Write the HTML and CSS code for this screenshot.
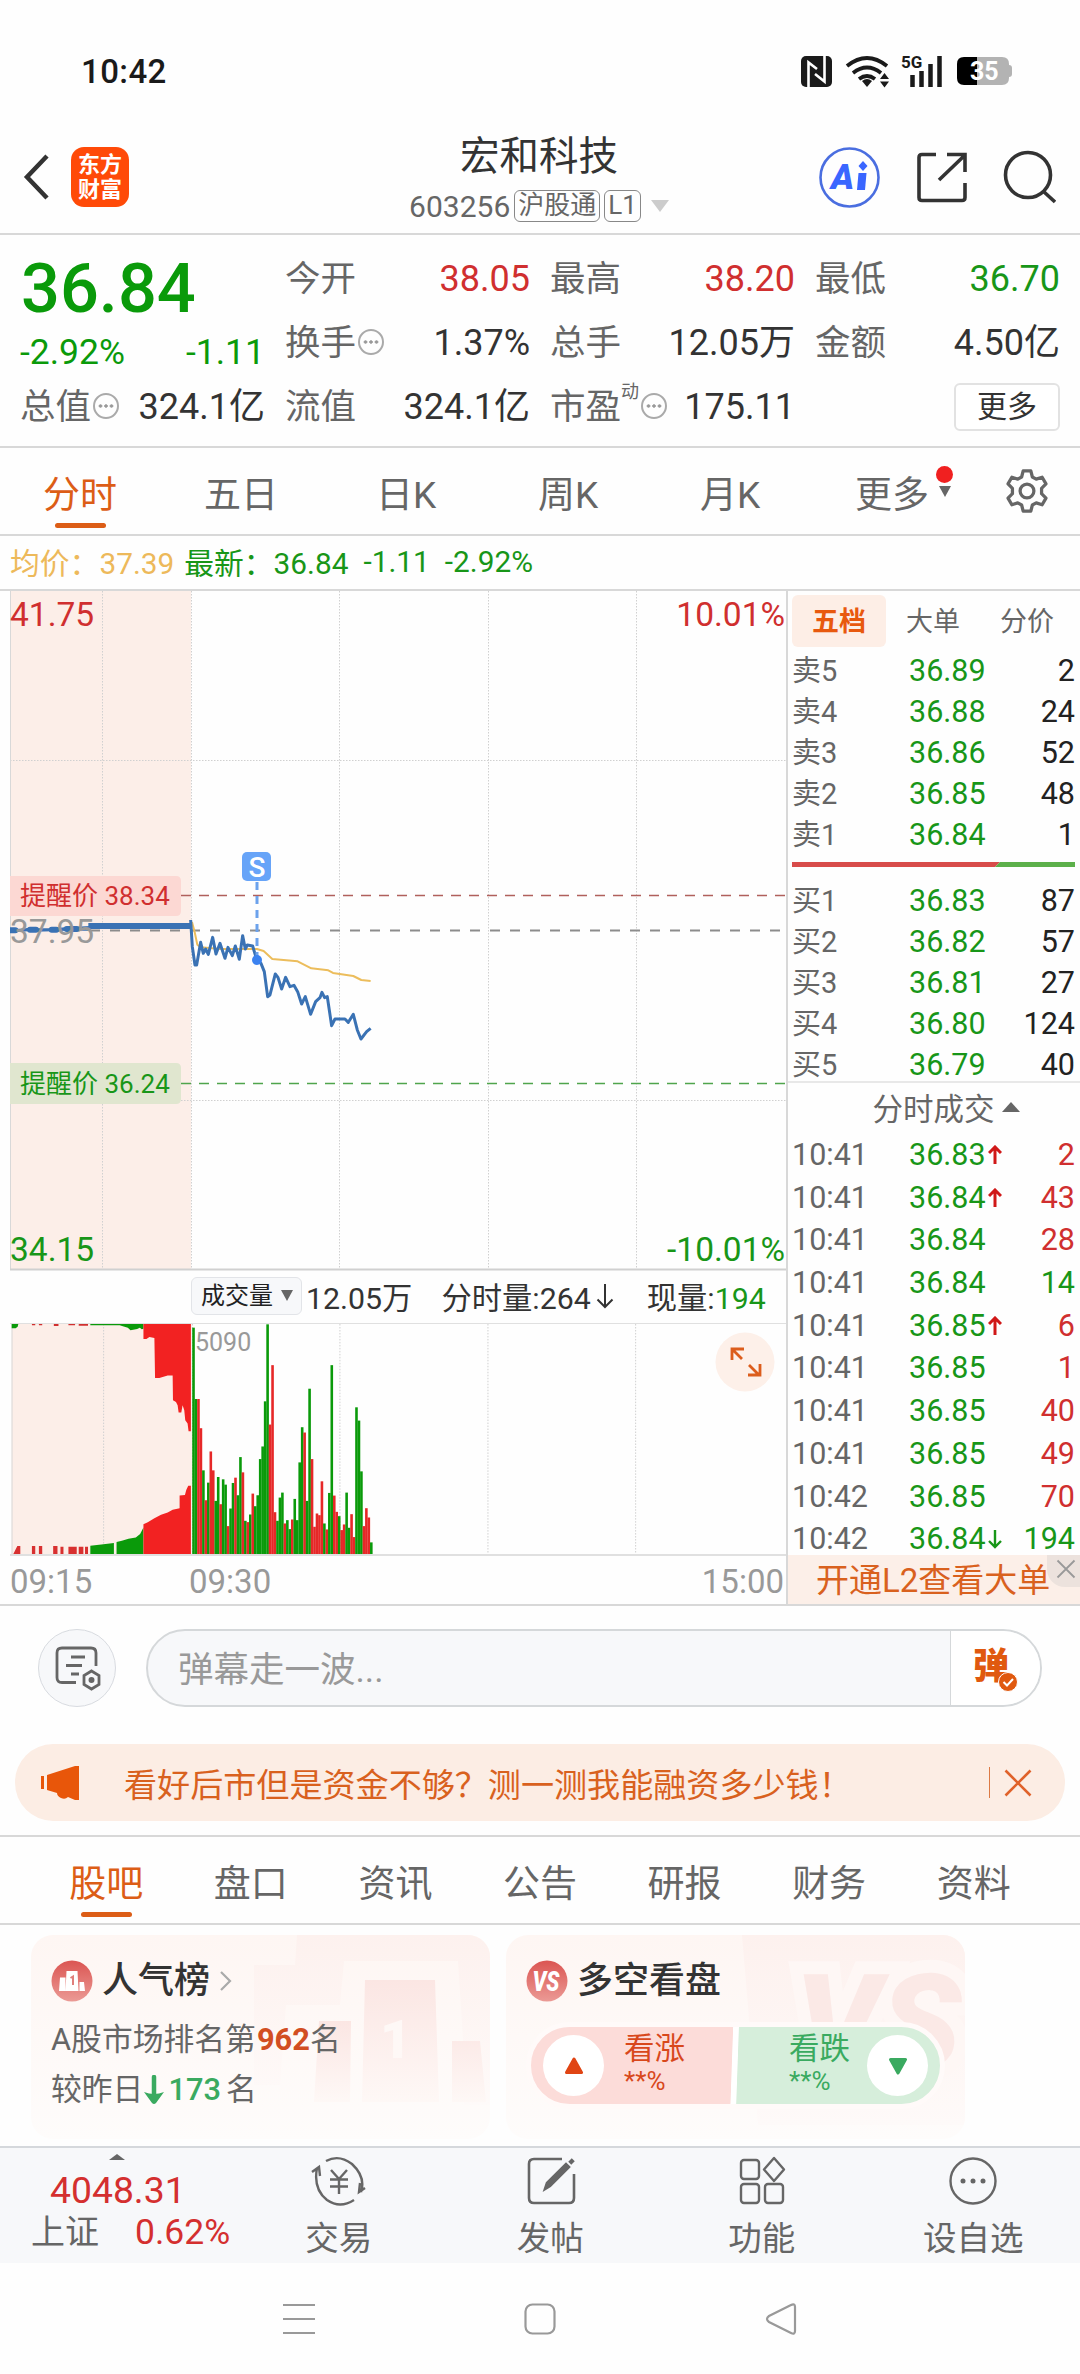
FILE: index.html
```html
<!DOCTYPE html>
<html lang="zh-CN">
<head>
    <meta charset="UTF-8">
    <meta name="viewport" content="width=device-width, initial-scale=1.0">
    <title>宏和科技 603256</title>
    <link rel="stylesheet" href="styles.css">
</head>

<body>

<!-- Phone status bar -->
<div class="status-bar">
    <span class="clock">10:42</span>
    <svg class="status-icons" width="214" height="34" viewBox="799 54 214 34">
        <rect x="801" y="56" width="31" height="31" rx="5" fill="#1a1a1a"/>
        <path d="M808.500 87V62.500L817 69M824.500 56V81.500L815 74" fill="none" stroke="#fff" stroke-width="2.600"/>
        <g fill="none" stroke="#1a1a1a" stroke-width="3.800">
            <path d="M847 66q20-16 40 0"/>
            <path d="M853 73q14-11 28 0"/>
            <path d="M859 79q8-6 16 0"/>
        </g>
        <path d="M862 81q5-4 10 0l-5 6z" fill="#1a1a1a"/>
        <path d="M880 79l4.500-6 4.500 6zM880 81.500l4.500 6 4.500-6z" fill="#1a1a1a"/>
        <text x="901" y="68" class="net-label">5G</text>
        <path d="M912.500 75v12M921.500 71v16M930.500 64v23M939.500 56v31" stroke="#1a1a1a" stroke-width="4.500"/>
        <path d="M968 57h34q7 0 7 7v1q3 0 3 3v6q0 3-3 3v1q0 7-7 7h-34z" fill="#b3b3b3"/>
        <path d="M977 57h-13q-7 0-7 7v14q0 7 7 7h13z" fill="#000"/>
        <text x="970" y="80" class="battery-label">35</text>
    </svg>
</div>

<!-- Title bar -->
<div class="header">
    <svg class="back" width="28" height="50" viewBox="0 0 28 50"><path d="M24 4L4 25l20 21" fill="none" stroke="#333" stroke-width="4.500"/></svg>
    <div class="logo"><span>东方</span><span>财富</span></div>
    <div class="stock-title">
        <h1>宏和科技</h1>
        <div class="stock-code">603256<span class="tag">沪股通</span><span class="tag">L1</span><i class="tri-down big"></i></div>
    </div>
    <svg class="header-icons" width="240" height="64" viewBox="816 145 240 64">
        <circle cx="849.500" cy="177.500" r="29" fill="none" stroke="#4a6ee0" stroke-width="2.600"/>
        <text x="831" y="188.500" class="ai-label">A</text>
        <path d="M858.500 173h8l-1.500 17h-8z" fill="#3a66ff"/>
        <path d="M863 161l4.500 5-4.500 5-4.500-5z" fill="#3a66ff"/>
        <g fill="none" stroke="#333" stroke-width="3.600">
            <path d="M936 154.500h-14q-3 0-3 3v40q0 3 3 3h40q3 0 3-3V183"/>
            <path d="M947 154.500h18V172M964 156l-25 24"/>
            <circle cx="1028" cy="175" r="22.500"/>
            <path d="M1043 191l12 11"/>
        </g>
    </svg>
</div>

<!-- Quote summary -->
<div class="quote">
    <div class="price-box">
        <div class="price">36.84</div>
        <div class="change"><span>-2.92%</span><span>-1.11</span></div>
    </div>
    <div class="cell"><label>今开</label><b class="red">38.05</b></div>
    <div class="cell"><label>最高</label><b class="red">38.20</b></div>
    <div class="cell"><label>最低</label><b class="green">36.70</b></div>
    <div class="cell"><label>换手<i class="info"></i></label><b>1.37%</b></div>
    <div class="cell"><label>总手</label><b>12.05万</b></div>
    <div class="cell"><label>金额</label><b>4.50亿</b></div>
    <div class="cell"><label>总值<i class="info"></i></label><b>324.1亿</b></div>
    <div class="cell"><label>流值</label><b>324.1亿</b></div>
    <div class="cell"><label>市盈<sup>动</sup><i class="info"></i></label><b>175.11</b></div>
    <div class="cell more-cell"><button class="more">更多</button></div>
</div>

<!-- Chart period tabs -->
<div class="period-tabs">
    <span class="active">分时</span>
    <span>五日</span>
    <span>日K</span>
    <span>周K</span>
    <span>月K</span>
    <span class="more-tab">更多<i class="dot"></i><i class="tri-down"></i></span>
    <svg width="46" height="46" viewBox="0 0 24 24" fill="none" stroke="#666" stroke-width="1.700" stroke-linejoin="round">
        <path d="M10 1.500h4l.8 3.200 2 1.100 3.100-1 2 3.500-2.300 2.300v2.800l2.300 2.300-2 3.500-3.100-1-2 1.100-.8 3.200h-4l-.8-3.200-2-1.100-3.100 1-2-3.500 2.300-2.300v-2.800l-2.300-2.300 2-3.500 3.100 1 2-1.100z"/>
        <circle cx="12" cy="12" r="3.600"/>
    </svg>
</div>

<div class="avg-line">
    <span class="yellow">均价：37.39</span>
    <span class="green">最新：36.84</span>
    <span class="green">-1.11</span>
    <span class="green">-2.92%</span>
</div>

<div class="market">
    <!-- Left side (price and volume charts) -->
    <div class="charts">
        <svg class="price-chart" width="776" height="680" viewBox="10 591 776 680">
            <rect x="10" y="591" width="181" height="679" fill="#fceee8"/>
            <g stroke="#d0d0d0" stroke-width="1" stroke-dasharray="1.500 1.500">
                <path d="M102.500 591v679M191.500 591v679M339.500 591v679M488.500 591v679M636.500 591v679M10 760.500h776M10 1100.500h776"/>
            </g>
            <path d="M10.500 591v679" stroke="#d8d8d8"/>
            <path d="M10 1269.500h776" stroke="#d0d0d0" stroke-width="2"/>
            <path d="M10 930.500h776" stroke="#8c8c8c" stroke-width="2" stroke-dasharray="10 10"/>
            <path d="M181 895.500h605" stroke="#b0605c" stroke-width="1.500" stroke-dasharray="10 8"/>
            <path d="M181 1083.500h605" stroke="#4fa54c" stroke-width="1.500" stroke-dasharray="10 8"/>
            <path d="M10 876h166q5 0 5 5v30q0 5-5 5H10z" fill="#fcd8d3"/>
            <path d="M10 1063h166q5 0 5 5v31q0 5-5 5H10z" fill="#e0e6cf"/>
            <text x="20" y="905" class="alert-text red">提醒价 38.34</text>
            <text x="20" y="1093" class="alert-text green">提醒价 36.24</text>
            <g transform="translate(0 900) scale(.3333)" fill="none" stroke-linejoin="round">
                <path d="M576 66l8 30 8 38 10 8 60 5 109 0 20 6 26 24 76 7 41 21 51 6 14 8 61 9 24 12 28 3" stroke="#ecbd5c" stroke-width="6"/>
                <path d="M28 91H60L90 88l15 2 55-1 40-2 70-4M190 87h80" stroke="#3a72b4" stroke-width="10" />
                <path d="M28 91h18M90 89h18M155 89h14M200 87h30" stroke="#3a72b4" stroke-width="18" stroke-linecap="round"/>
                <path d="M265 78H575" stroke="#3a72b4" stroke-width="18"/>
                <path d="M572 60l5 80 8 55h5l12-68 8 33 7-13 8 16 13-51 10 50 12-32 15 45 9-33 13 25 9-29 12 40 10-71 8 40 6-12 16 3 12 40 13 12 10 25 10 75 7-5 16-63 8 10 11 35 12-35 13 28 12-4 11 19 12 37 11-22 16 53 15-38 13-12 6-16 8 16 8-3 13 87 10-20h30l10 10 15-24 12 47 11 27 17-22 12-10" stroke="#3a72b4" stroke-width="9"/>
            </g>
            <path d="M257 882v74" stroke="#6ca2ec" stroke-width="3" stroke-dasharray="8 6"/>
            <circle cx="257" cy="960" r="5" fill="#3b82f0"/>
            <rect x="242" y="852" width="29" height="29" rx="5" fill="#67a4f8"/>
            <text x="257" y="876.500" class="s-badge">S</text>
            <text x="10" y="626" class="axis red">41.75</text>
            <text x="785" y="626" class="axis end red">10.01%</text>
            <text x="10" y="943" class="axis gray">37.95</text>
            <text x="10" y="1261" class="axis green">34.15</text>
            <text x="785" y="1261" class="axis end green">-10.01%</text>
        </svg>

        <div class="volume-head">
            <span class="volume-select">成交量<i class="tri-down"></i></span>
            <span>12.05万</span>
            <span class="minute-volume">分时量:264<svg width="20" height="28" viewBox="0 0 20 28"><path d="M10 2v23M2.500 17.500L10 25l7.500-7.500" fill="none" stroke="#333" stroke-width="2"/></svg></span>
            <span>现量:<b class="green">194</b></span>
        </div>

        <div class="volume-wrap">
            <svg class="volume-chart" width="776" height="231" viewBox="30 190 2328 693">
                <rect x="30" y="190" width="543" height="693" fill="#fceee8"/>
                <path d="M307 190v693M575 190v693M1019 190v693M1465 190v693M1910 190v693" stroke="#d0d0d0" stroke-width="3" stroke-dasharray="4.500 4.500"/>
                <path d="M31 190v693" stroke="#d8d8d8" stroke-width="3"/>
                <!-- call auction, upper half -->
                <path d="M30 190h20l-2 8-6 5H30zM267 190h95v4h-95zM345 190h82v14l-5 2-6-5-8 4-20 4-8-8-20-6z" fill="#0a9a0a"/>
                <path d="M91 190h10v4H91zM112 190h10v4h-10zM157 190h14v6h-14zM201 190h20v4h-20zM232 190h28v5h-28z" fill="#d03030"/>
                <path d="M427 190H570V513H563L560 490 553 480 550 450 545 435 541 457H533L530 435 525 425 516 420 515 345 500 345 475 353H462L460 232 445 229 436 235H427z" fill="#f22222"/>
                <!-- call auction, lower half -->
                <path d="M35 883l12-24h9v24zM91 859h10v24H91zM112 859h10v24h-10zM155 859h13v24h-13zM177 861h9v22h-9zM201 861h25v22h-25zM232 861h14v22h-14zM251 861h9v22h-9z" fill="#d83030"/>
                <path d="M267 883v-25l33-4 38-4v33zM346 883v-36l16-4 20-6 22-4 13-10 10-20v80z" fill="#0a9a0a"/>
                <path d="M427 883V793L440 787 460 775 480 765 500 758 515 750 536 745V707L552 705 556 690 562 677H570V883z" fill="#f22222"/>
                <g id="volume-bars"></g>
            </svg>
            <span class="volume-max">5090</span>
            <svg class="expand" width="60" height="60" viewBox="0 0 60 60">
                <circle cx="30" cy="30" r="29.500" fill="#fdf0e9"/>
                <path d="M17 28V17h12M17.500 17.500L27 27M45 32v11H33M43.500 42.500L34 33" fill="none" stroke="#dc5d1c" stroke-width="2.800"/>
            </svg>
        </div>

        <div class="times"><span>09:15</span><span>09:30</span><span class="last">15:00</span></div>
    </div>

    <!-- Right side (order book) -->
    <div class="book">
        <div class="book-tabs"><span class="active">五档</span><span>大单</span><span>分价</span></div>
        <div class="levels" id="sells"></div>
        <svg class="ratio" width="283" height="5" viewBox="0 0 283 5"><path d="M0 0h208l-5 5H0z" fill="#d84c4a"/><path d="M208 0h75v5h-80z" fill="#5cb04a"/></svg>
        <div class="levels buys" id="buys"></div>
        <div class="trades-title">分时成交<i class="tri-up"></i></div>
        <div class="trades" id="trades"></div>
        <div class="l2-banner">开通L2查看大单
            <span class="l2-close"><svg width="20" height="20" viewBox="0 0 20 20"><path d="M1.500 1.500l17 17M18.500 1.500l-17 17" stroke="#999" stroke-width="1.800"/></svg></span>
        </div>
    </div>
</div>

<!-- Bullet comments -->
<div class="comment-row">
    <div class="comment-set">
        <svg width="50" height="50" viewBox="0 0 50 50" fill="none" stroke="#666" stroke-width="2.800">
            <path d="M24 39.500H10q-5 0-5-5V10q0-5 5-5h29q5 0 5 5v13"/>
            <path d="M19 14h14M14 22.500h16M19 31h8"/>
            <path d="M39.500 28l7.500 4.500v9L39.500 46 32 41.500v-9z"/>
            <circle cx="39.500" cy="37" r="1.600" fill="#666"/>
        </svg>
    </div>
    <div class="comment-input">
        <span class="placeholder">弹幕走一波...</span>
        <span class="bullet">弹<svg width="20" height="20" viewBox="0 0 20 20"><circle cx="10" cy="10" r="9.500" fill="#e0590f" stroke="#fff"/><path d="M5.500 10l3.500 3.500 6-6.500" fill="none" stroke="#fff" stroke-width="2"/></svg></span>
    </div>
</div>

<div class="notice">
    <svg width="40" height="34" viewBox="0 0 40 34" fill="#e8560a"><path d="M0 10h3v13H0zM6 9L34 0h4v34h-4l-7-3q-3 3-7 1-4-2-4-5L6 24z"/></svg>
    <p>看好后市但是资金不够？测一测我能融资多少钱！</p>
    <i class="notice-line"></i>
    <svg width="28" height="28" viewBox="0 0 28 28"><path d="M1.500 1.500l25 25M26.500 1.500l-25 25" stroke="#e0622a" stroke-width="2.600"/></svg>
</div>

<div class="section-tabs">
    <span class="active">股吧</span>
    <span>盘口</span>
    <span>资讯</span>
    <span>公告</span>
    <span>研报</span>
    <span>财务</span>
    <span>资料</span>
</div>

<div class="cards">
    <div class="card rank">
        <svg class="watermark" width="236" height="170" viewBox="255 1934 236 170">
            <defs>
                <linearGradient id="fade" x1="0" y1="0" x2="0" y2="1"><stop offset="0" stop-color="#fbe6e3"/><stop offset="1" stop-color="#fef8f6"/></linearGradient>
                <linearGradient id="back" x1="0" y1="0" x2="0" y2="1"><stop offset="0" stop-color="#fdf1ee"/><stop offset="1" stop-color="#fefaf9"/></linearGradient>
            </defs>
            <path d="M298 1934h193v170h-26v-50l-6-94H345l-4 44h-54l-6 80h-26v-120h41z" fill="url(#back)"/>
            <path d="M366 1979h70l4 122h-77z" fill="url(#fade)"/>
            <path d="M320 2020h32l-1 81h-36zM453 2040h28l6 61h-34z" fill="url(#fade)"/>
            <text x="381" y="2057" class="podium">1</text>
        </svg>
        <h2>
            <svg width="42" height="42" viewBox="0 0 42 42">
                <defs><linearGradient id="ball" x1="0" y1="0" x2="0" y2="1"><stop offset="0" stop-color="#db5552"/><stop offset="1" stop-color="#eb9a95"/></linearGradient></defs>
                <circle cx="21" cy="21" r="20.500" fill="url(#ball)"/>
                <path d="M9 17.500h5.500V31H8zM15.500 11h11l1 20h-13zM28.500 22h4.500l1 9h-5.500z" fill="#fff"/>
                <path d="M19.500 18l2.500-1.500v8.500" fill="none" stroke="#e07f7b" stroke-width="2"/>
            </svg>
            人气榜
            <svg width="14" height="22" viewBox="0 0 14 22"><path d="M2 2l9 9-9 9" fill="none" stroke="#aaa" stroke-width="2.200"/></svg>
        </h2>
        <p>A股市场排名第<b class="orange">962</b>名</p>
        <p>较昨日<svg width="20" height="30" viewBox="0 0 20 30"><path d="M10 2v18" stroke="#3aaa60" stroke-width="4.500" stroke-linecap="round"/><path d="M0 17q10 4 20 0l-8 11q-2 2-4 0z" fill="#3aaa60"/></svg><b class="up-green">173</b>名</p>
    </div>
    <div class="card vote">
        <svg class="watermark" width="224" height="204" viewBox="741 1934 224 204">
            <path d="M742 1934h223v190H758z" fill="url(#back)"/>
            <text x="795" y="2068" class="vs-mark" textLength="166" lengthAdjust="spacingAndGlyphs">VS</text>
        </svg>
        <h2>
            <svg width="42" height="42" viewBox="0 0 42 42">
                <circle cx="21" cy="21" r="20.500" fill="url(#ball)"/>
                <text x="20" y="31" class="vs-icon" textLength="27" lengthAdjust="spacingAndGlyphs">VS</text>
            </svg>
            多空看盘
        </h2>
        <div class="vote-pill">
            <div class="vote-up">
                <i class="vote-ball"><svg width="20" height="18" viewBox="0 0 20 18"><path d="M10 2l7.500 13.500h-15z" fill="#e04514" stroke="#e04514" stroke-width="3" stroke-linejoin="round"/></svg></i>
                <span>看涨<small>**%</small></span>
            </div>
            <div class="vote-down">
                <span>看跌<small>**%</small></span>
                <i class="vote-ball"><svg width="20" height="18" viewBox="0 0 20 18"><path d="M10 16l7.500-13.500h-15z" fill="#3aaa60" stroke="#3aaa60" stroke-width="3" stroke-linejoin="round"/></svg></i>
            </div>
        </div>
    </div>
</div>

<!-- Bottom navigation -->
<div class="bottom-nav">
    <div class="index">
        <i class="tri-up"></i>
        <div class="index-value">4048.31</div>
        <div class="index-row"><span>上证</span><b>0.62%</b></div>
    </div>
    <div class="nav-item">
        <svg width="56" height="52" viewBox="0 0 56 52" fill="none" stroke="#666" stroke-width="2.400">
            <path d="M15 6q13-7 26 3 14 13 9 28M54 33l-6 4 1-9M43 45q-14 9-27 0Q2 34 6 13M1 17l7-5 1 9"/>
            <path d="M20 15l8 9 8-9M19 24.500h18M19 31.500h18M28 24v15"/>
        </svg>
        <span>交易</span>
    </div>
    <div class="nav-item">
        <svg width="56" height="52" viewBox="0 0 56 52" fill="none" stroke="#666" stroke-width="2.600">
            <path d="M40 4H12q-5 0-5 5v34q0 5 5 5h35q5 0 5-5V19"/>
            <path d="M23 34l2-6L44 9l3 3-19 19z" fill="#666"/><path d="M48 5l3 3" stroke-width="5"/>
        </svg>
        <span>发帖</span>
    </div>
    <div class="nav-item">
        <svg width="56" height="52" viewBox="0 0 56 52" fill="none" stroke="#666" stroke-width="2.400" stroke-linejoin="round">
            <rect x="7" y="5" width="18" height="19" rx="3"/>
            <rect x="7" y="29" width="18" height="19" rx="3"/>
            <rect x="31" y="29" width="18" height="19" rx="3"/>
            <path d="M40 3l10 11.500L40 26 30 14.500z"/>
        </svg>
        <span>功能</span>
    </div>
    <div class="nav-item">
        <svg width="56" height="52" viewBox="0 0 56 52" fill="#666">
            <circle cx="28" cy="26" r="22.500" fill="none" stroke="#666" stroke-width="2.400"/>
            <circle cx="18" cy="26" r="2.500"/><circle cx="28" cy="26" r="2.500"/><circle cx="38" cy="26" r="2.500"/>
        </svg>
        <span>设自选</span>
    </div>
</div>

<div class="system-nav">
    <svg width="32" height="32" viewBox="0 0 32 32"><path d="M0 2h32M0 16h32M0 30h32"/></svg>
    <svg width="32" height="32" viewBox="0 0 32 32"><rect x="1.500" y="1.500" width="29" height="29" rx="7"/></svg>
    <svg width="32" height="32" viewBox="0 0 32 32"><path d="M30 4v24q0 4-4 2L4 19q-4-3 0-6L26 2q4-2 4 2z"/></svg>
</div>

<script>
    // price, size
    const sells = [["卖5", "36.89", 2], ["卖4", "36.88", 24], ["卖3", "36.86", 52], ["卖2", "36.85", 48], ["卖1", "36.84", 1]];
    const buys = [["买1", "36.83", 87], ["买2", "36.82", 57], ["买3", "36.81", 27], ["买4", "36.80", 124], ["买5", "36.79", 40]];

    // time, price, direction, size, colour of the size
    const trades = [
        ["10:41", "36.83", "up", 2, "red"],
        ["10:41", "36.84", "up", 43, "red"],
        ["10:41", "36.84", "", 28, "red"],
        ["10:41", "36.84", "", 14, "green"],
        ["10:41", "36.85", "up", 6, "red"],
        ["10:41", "36.85", "", 1, "red"],
        ["10:41", "36.85", "", 40, "red"],
        ["10:41", "36.85", "", 49, "red"],
        ["10:42", "36.85", "", 70, "red"],
        ["10:42", "36.84", "down", 194, "green"]
    ];

    const arrows = {
        up: '<svg width="14" height="20" viewBox="0 0 14 20"><path d="M7 19V2M1 8l6-6 6 6" fill="none" stroke="#d01818" stroke-width="3"/></svg>',
        down: '<svg width="14" height="20" viewBox="0 0 14 20"><path d="M7 1v17M1 12l6 6 6-6" fill="none" stroke="#189618" stroke-width="2.400"/></svg>'
    };

    function renderLevels(id, rows) {
        document.getElementById(id).innerHTML = rows.map(r =>
            `<div class="row"><span>${r[0]}</span><span class="green">${r[1]}</span><span class="size">${r[2]}</span></div>`).join("");
    }

    renderLevels("sells", sells);
    renderLevels("buys", buys);

    document.getElementById("trades").innerHTML = trades.map(t =>
        `<div class="row"><span>${t[0]}</span><span class="green">${t[1]}${arrows[t[2]] || ""}</span><span class="size ${t[4]}">${t[3]}</span></div>`).join("");

    // One bar per minute since 09:30, g = down, r = up
    const volumes = ("682g 467g 467r 379r 252g 162r 215g 309r 252r 160g 232g 150r 225g 209g 84r 137g 214g 230r 177g 292g " +
        "246r 100g 96r 119g 182r 144g 177g 286g 324g 460g 692g 390r 569r 126r 100g 170g 185g 92r 102g 75g " +
        "104r 166g 102g 276g 382g 366r 160g 498g 286r 82r 122r 117r 219r 92g 74r 184g 569g 176r 127r 114g " +
        "72r 89r 185g 79g 120r 51r 442g 402g 249g 84r 138r 110r 35g").split(" ");

    document.getElementById("volume-bars").innerHTML = volumes.map((v, i) => {
        const h = parseInt(v);
        const color = v.endsWith("g") ? "#0a9a0a" : "#e62828";
        return `<rect x="${(574 + i * 7.44).toFixed(1)}" y="${883 - h}" width="7.8" height="${h}" fill="${color}"/>`;
    }).join("");
</script>

</body>
</html>
```
FILE: styles.css
```css
/* Basic layout and styling */
* {
    box-sizing: border-box;
}

body {
    width: 1080px;
    height: 2374px;
    margin: 0;
    display: flex;
    flex-direction: column;
    overflow: hidden;
    background-color: #fefefe;
    color: #333;
    font-family: Roboto, "Noto Sans CJK SC", sans-serif;
    font-weight: 400;
}

b {
    font-weight: 400;
}

i {
    font-style: normal;
}

svg {
    flex: none;
    display: block;
}

.red {
    color: #d02f2f;
    fill: #d02f2f;
}

.green {
    color: #189618;
    fill: #189618;
}

.yellow {
    color: #edb95a;
}

.gray {
    fill: #999;
}

.tri-down {
    display: inline-block;
    border: 6.5px solid transparent;
    border-top: 11px solid #666;
    border-bottom: 0;
}

.tri-down.big {
    border-width: 12px 9px 0;
    border-top-color: #ccc;
    margin-left: 10px;
}

.tri-up {
    display: inline-block;
    border: 9px solid transparent;
    border-bottom: 10px solid #666;
    border-top: 0;
}

/* Status bar */
.status-bar {
    height: 126px;
    padding: 16px 67px 0 81px;
    display: flex;
    align-items: center;
    justify-content: space-between;
}

.status-icons {
    overflow: visible;
}

.clock {
    font-size: 33px;
    font-weight: 500;
    letter-spacing: 0.4px;
    color: #1a1a1a;
}

.net-label {
    font-size: 17px;
    font-weight: 700;
    fill: #1a1a1a;
}

.battery-label {
    font-size: 25px;
    font-weight: 700;
    fill: #fff;
}

/* Header */
.header {
    height: 109px;
    padding: 0 24px 5px 23px;
    display: flex;
    align-items: center;
    border-bottom: 2px solid #d8d8d8;
}

.ai-label {
    font-size: 35px;
    font-weight: 900;
    font-style: italic;
    fill: #3a66ff;
}

.logo {
    width: 58px;
    height: 60px;
    margin-left: 20px;
    border-radius: 13px;
    background-color: #ff4a08;
    color: #fff;
    font-size: 22px;
    font-weight: 700;
    line-height: 25px;
    display: flex;
    flex-direction: column;
    align-items: center;
    justify-content: center;
}

.stock-title {
    flex: 1;
    padding-left: 133px;
    padding-top: 4px;
    text-align: center;
}

.stock-title h1 {
    margin: 0;
    font-size: 39.5px;
    font-weight: 400;
    line-height: 54px;
}

.stock-code {
    height: 44px;
    display: flex;
    align-items: center;
    justify-content: center;
    font-size: 30px;
    color: #666;
}

.tag {
    height: 32px;
    margin-left: 4px;
    padding: 0 3px;
    border: 1.5px solid #888;
    border-radius: 6px;
    font-size: 26px;
    line-height: 29px;
}

/* Quote */
.quote {
    height: 213px;
    padding: 12px 20px 12px 21px;
    display: grid;
    grid-template-columns: repeat(4, 244px);
    grid-template-rows: repeat(3, 64px);
    column-gap: 21px;
    border-bottom: 2px solid #d8d8d8;
}

.price-box {
    grid-row: span 2;
    color: #0a9a0a;
}

.price {
    padding-top: 1px;
    font-size: 68.5px;
    font-weight: 500;
    line-height: 82px;
}

.change {
    display: flex;
    justify-content: space-between;
    margin: -1px 0 0 -1px;
    font-size: 35.5px;
    line-height: 46px;
}

.cell {
    display: flex;
    align-items: center;
    justify-content: space-between;
    font-size: 36px;
    line-height: 50px;
    white-space: nowrap;
}

.cell label {
    display: flex;
    align-items: center;
    margin-left: -1px;
    color: #666;
    font-size: 35.5px;
}

.cell sup {
    font-size: 18px;
    align-self: flex-start;
    line-height: 20px;
}

.info {
    width: 26px;
    height: 26px;
    margin: 0 0 3px 2px;
    border: 2px solid #aaa;
    border-radius: 50%;
    background: radial-gradient(circle, #999 1.4px, transparent 2px) center / 5.5px 22px repeat-x;
    background-clip: content-box;
    padding: 0 3px;
}

.more-cell {
    justify-content: flex-end;
}

.more {
    width: 106px;
    height: 48px;
    padding: 0;
    border: 2px solid #e2e2e2;
    border-radius: 6px;
    background-color: #fff;
    color: #333;
    font-family: inherit;
    font-size: 30px;
    line-height: 40px;
}

/* Period tabs */
.period-tabs {
    height: 88px;
    padding-right: 30px;
    display: grid;
    grid-template-columns: 160px 162px 168px 156px 168px 190px 46px;
    align-items: center;
    border-bottom: 2px solid #d8d8d8;
    color: #666;
    font-size: 37px;
    text-align: center;
}

.period-tabs span,
.section-tabs span {
    position: relative;
    height: 86px;
    line-height: 95px;
}

.period-tabs .more-tab {
    padding-right: 34px;
}

.period-tabs .active,
.section-tabs .active {
    color: #dc5d16;
}

.period-tabs .active::after,
.section-tabs .active::after {
    content: "";
    position: absolute;
    left: 50%;
    bottom: 6px;
    width: 51px;
    height: 5px;
    margin-left: -25px;
    border-radius: 3px;
    background-color: #dc5d16;
}

.dot {
    position: absolute;
    right: 51px;
    top: 18px;
    width: 17px;
    height: 17px;
    border-radius: 50%;
    background-color: #f02020;
}

.more-tab .tri-down {
    position: absolute;
    right: 53px;
    top: 38px;
}

.avg-line {
    height: 53px;
    padding: 0 0 3px 10px;
    display: flex;
    align-items: center;
    font-size: 29.8px;
    white-space: nowrap;
}

.avg-line span {
    margin-right: 10px;
}

.avg-line span:nth-child(n+2) {
    margin-right: 15px;
}

/* Charts and order book */
.market {
    height: 1017px;
    display: flex;
    border-top: 2px solid #d8d8d8;
    border-bottom: 2px solid #d8d8d8;
}

.charts {
    width: 786px;
    padding-left: 10px;
}

.price-chart {
    height: 680px;
}

.axis {
    font-size: 33.5px;
}

.end {
    text-anchor: end;
}

.alert-text {
    font-size: 26px;
}

.s-badge {
    font-size: 28px;
    font-weight: 500;
    fill: #fff;
    text-anchor: middle;
}

.volume-head {
    height: 52px;
    padding: 0 0 3px 181px;
    display: flex;
    align-items: center;
    font-size: 30.3px;
    white-space: nowrap;
}

.volume-head > span {
    flex: none;
    margin-right: 29px;
}

.volume-head .volume-select {
    width: 111px;
    height: 38px;
    margin-right: 4px;
    padding-left: 9px;
    display: flex;
    align-items: center;
    gap: 8px;
    border: 1.5px solid #e2e4e8;
    border-radius: 6px;
    background-color: #f7f8fa;
    color: #222;
    font-size: 24px;
    line-height: 34px;
}

.minute-volume {
    display: flex;
    align-items: center;
    gap: 4px;
}

.volume-head .minute-volume {
    margin-right: 32px;
}

.volume-wrap {
    position: relative;
    border-top: 1px solid #e0e0e0;
    border-bottom: 2px solid #e0e0e0;
}

.volume-chart {
    height: 230px;
}

.volume-max {
    position: absolute;
    left: 185px;
    top: 4px;
    color: #999;
    font-size: 25px;
    line-height: 30px;
}

.expand {
    position: absolute;
    right: 11px;
    top: 8px;
}

.times {
    height: 48px;
    display: flex;
    align-items: center;
    padding: 2px 2px 0 0;
    color: #999;
    font-size: 33px;
}

.times span {
    width: 179px;
}

.times .last {
    width: auto;
    margin-left: auto;
}

.book {
    width: 294px;
    border-left: 2px solid #d8d8d8;
    display: flex;
    flex-direction: column;
}

.book > * {
    flex: none;
}

.book-tabs {
    height: 60px;
    padding: 4px 4px 0;
    display: flex;
    color: #666;
    font-size: 27px;
    line-height: 54px;
    text-align: center;
}

.book-tabs span {
    width: 94px;
    height: 52px;
}

.book-tabs .active {
    border-radius: 6px;
    background-color: #fdeee6;
    color: #e8590e;
    font-weight: 700;
}

.levels {
    height: 205px;
}

.levels.buys {
    height: 200px;
}

.row {
    display: grid;
    grid-template-columns: 117px 1fr auto;
    height: 41px;
    padding: 0 5px 0 4px;
    font-size: 30.5px;
    line-height: 40px;
    color: #666;
}

.row .size {
    color: #222;
}

.levels .row span:first-child {
    font-size: 29px;
}

.trades {
    height: 422px;
}

.trades .row {
    height: 42.7px;
    line-height: 43px;
}

.row svg {
    display: inline-block;
    margin-left: 2px;
}

.trades .size.red {
    color: #d02f2f;
}

.trades .size.green {
    color: #189618;
}

.ratio {
    margin: 6px 0 14px 4px;
}

.trades-title {
    height: 52px;
    padding: 0 0 3px 24px;
    display: flex;
    align-items: center;
    justify-content: center;
    gap: 7px;
    border-top: 2px solid #e8e8e8;
    color: #666;
    font-size: 30.5px;
}

.l2-banner {
    position: relative;
    height: 49px;
    padding-left: 28px;
    background-color: #fcefe8;
    color: #d9611e;
    font-size: 33px;
    line-height: 52px;
    white-space: nowrap;
}

.l2-close {
    position: absolute;
    right: 0;
    top: 0;
    width: 33px;
    height: 32px;
    border-bottom-left-radius: 18px;
    background-color: #ece2dd;
    display: flex;
    align-items: center;
    justify-content: center;
    padding: 0 0 4px 4px;
}

/* Comment input */
.comment-row {
    display: flex;
    gap: 30px;
    padding: 23px 38px 0;
}

.comment-set {
    width: 78px;
    height: 78px;
    border: 1.5px solid #d8dbe0;
    border-radius: 50%;
    background-color: #f7f8fa;
    display: flex;
    align-items: center;
    justify-content: center;
}

.comment-input {
    flex: 1;
    height: 78px;
    border: 2px solid #d5d8da;
    border-radius: 39px;
    background-color: #f7f8fa;
    overflow: hidden;
    display: flex;
    justify-content: space-between;
}

.placeholder {
    padding-left: 30px;
    color: #999;
    font-size: 35.5px;
    line-height: 79px;
}

.bullet {
    position: relative;
    width: 90px;
    border-left: 1.5px solid #d5d8da;
    background-color: #fff;
    color: #e0590f;
    font-size: 36px;
    font-weight: 900;
    line-height: 72px;
    padding-left: 22px;
}

.bullet svg {
    position: absolute;
    left: 47px;
    top: 41px;
}

.notice {
    height: 77px;
    margin: 37px 15px 14px;
    padding: 0 33px 0 26px;
    display: flex;
    align-items: center;
    border-radius: 38px;
    background-color: #fcede4;
}

.notice p {
    flex: 1;
    margin: 0 0 0 43px;
    color: #d9611e;
    font-size: 33.1px;
    white-space: nowrap;
}

.notice-line {
    width: 1.5px;
    height: 31px;
    margin-right: 14px;
    background-color: #dc7a45;
}

/* Section tabs */
.section-tabs {
    height: 90px;
    padding: 0 34px;
    display: grid;
    grid-template-columns: repeat(7, 1fr);
    border-top: 2px solid #d8d8d8;
    border-bottom: 2px solid #d8d8d8;
    color: #666;
    font-size: 37px;
    text-align: center;
}

/* Cards */
.cards {
    height: 221px;
    padding: 10px 31px;
    display: flex;
    gap: 16px;
}

.card {
    position: relative;
    width: 459px;
    height: 204px;
    padding: 20px;
    border-radius: 22px;
    overflow: hidden;
    background: linear-gradient(#fef6f3, #fefcfb);
}

.watermark {
    position: absolute;
    right: 0;
    top: 0;
}

.podium {
    font-size: 54px;
    font-weight: 900;
    fill: #fef8f6;
}

.vs-mark {
    font-size: 134px;
    font-weight: 900;
    font-style: italic;
    fill: #fbe9e6;
    stroke: #fef7f5;
    stroke-width: 26px;
    paint-order: stroke;
}

.vs-icon {
    font-size: 27px;
    font-weight: 900;
    font-style: italic;
    fill: #fff;
    text-anchor: middle;
}

.card h2 {
    position: relative;
    margin: 0 0 8px;
    display: flex;
    align-items: center;
    gap: 9px;
    font-size: 36px;
    font-weight: 500;
    line-height: 52px;
}

.card p {
    position: relative;
    margin: 0;
    display: flex;
    align-items: center;
    font-size: 30.8px;
    line-height: 50px;
    color: #666;
}

.card p svg {
    margin: 0 4px 0 1px;
}

.orange {
    color: #d24e22;
    font-weight: 700;
    margin-left: 1px;
}

.up-green {
    color: #3aaa60;
    font-weight: 500;
    margin-right: 5px;
}

.vote-pill {
    position: relative;
    width: 419px;
    height: 87px;
    margin-top: 15px;
    border: 5px solid #fffaf9;
    border-radius: 44px;
    overflow: hidden;
    display: flex;
    background: linear-gradient(92deg, #fcdcd9 49%, #fff 49.2%, #fff 50.4%, #d6eedb 50.6%);
}

.card.vote h2 {
    margin-bottom: 0;
}

.vote-pill > div {
    flex: 1;
    display: flex;
    align-items: center;
    gap: 20px;
    padding: 0 12px;
    color: #d8481c;
    font-size: 30.5px;
    line-height: 34px;
}

.vote-pill span {
    padding-bottom: 3px;
}

.vote-pill .vote-down {
    justify-content: flex-end;
    color: #3aaa60;
    gap: 17px;
}

.vote-pill small {
    display: block;
    font-size: 26px;
    line-height: 30px;
}

.vote-ball {
    width: 61px;
    height: 61px;
    border-radius: 50%;
    background-color: #fff;
    display: flex;
    align-items: center;
    justify-content: center;
}

/* Bottom navigation */
.bottom-nav {
    height: 117px;
    display: grid;
    grid-template-columns: 233px repeat(4, 211.5px);
    border-top: 2px solid #d5d8dc;
    background-color: #f7f8fa;
    color: #666;
}

.index {
    padding-left: 31px;
    color: #d42f2f;
    font-size: 34px;
}

.index .tri-up {
    display: block;
    width: 0;
    margin: 6px 0 0 78px;
    border-width: 0 8.5px 6px;
}

.index-value {
    margin: 9px 0 0 19px;
    font-size: 37.3px;
    line-height: 42px;
}

.index-row {
    display: flex;
    gap: 36px;
    line-height: 42px;
}

.index-row span {
    color: #666;
}

.index-row b {
    font-size: 35.5px;
}

.nav-item {
    display: flex;
    flex-direction: column;
    align-items: center;
    padding-top: 7px;
    font-size: 33.5px;
    line-height: 48px;
}

.nav-item span {
    margin-top: 8px;
}

.system-nav {
    flex: 1;
    padding: 40px 283px 0;
    display: flex;
    justify-content: space-between;
    align-items: flex-start;
}

.system-nav svg {
    fill: none;
    stroke: #999;
    stroke-width: 2.2;
}
```
